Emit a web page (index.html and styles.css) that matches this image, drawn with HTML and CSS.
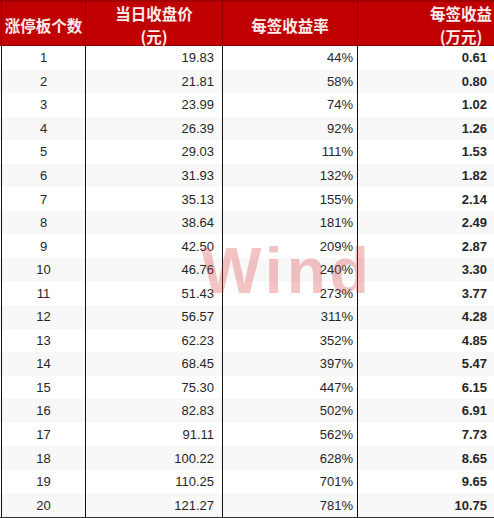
FILE: index.html
```html
<!DOCTYPE html>
<html lang="zh">
<head>
<meta charset="utf-8">
<link rel="stylesheet" href="styles.css">
</head>
<body>
<div class="table">
  <div class="head">
    <div class="hc c1">涨停板个数</div>
    <div class="hc c2"><span>当日收盘价</span><span>(元)</span></div>
    <div class="hc c3">每签收益率</div>
    <div class="hc c4"><div class="stack"><span>每签收益</span><span>(万元)</span></div></div>
  </div>
  <div class="row"><div class="c1">1</div><div class="c2">19.83</div><div class="c3">44%</div><div class="c4">0.61</div></div>
  <div class="row"><div class="c1">2</div><div class="c2">21.81</div><div class="c3">58%</div><div class="c4">0.80</div></div>
  <div class="row"><div class="c1">3</div><div class="c2">23.99</div><div class="c3">74%</div><div class="c4">1.02</div></div>
  <div class="row"><div class="c1">4</div><div class="c2">26.39</div><div class="c3">92%</div><div class="c4">1.26</div></div>
  <div class="row"><div class="c1">5</div><div class="c2">29.03</div><div class="c3">111%</div><div class="c4">1.53</div></div>
  <div class="row"><div class="c1">6</div><div class="c2">31.93</div><div class="c3">132%</div><div class="c4">1.82</div></div>
  <div class="row"><div class="c1">7</div><div class="c2">35.13</div><div class="c3">155%</div><div class="c4">2.14</div></div>
  <div class="row"><div class="c1">8</div><div class="c2">38.64</div><div class="c3">181%</div><div class="c4">2.49</div></div>
  <div class="row"><div class="c1">9</div><div class="c2">42.50</div><div class="c3">209%</div><div class="c4">2.87</div></div>
  <div class="row"><div class="c1">10</div><div class="c2">46.76</div><div class="c3">240%</div><div class="c4">3.30</div></div>
  <div class="row"><div class="c1">11</div><div class="c2">51.43</div><div class="c3">273%</div><div class="c4">3.77</div></div>
  <div class="row"><div class="c1">12</div><div class="c2">56.57</div><div class="c3">311%</div><div class="c4">4.28</div></div>
  <div class="row"><div class="c1">13</div><div class="c2">62.23</div><div class="c3">352%</div><div class="c4">4.85</div></div>
  <div class="row"><div class="c1">14</div><div class="c2">68.45</div><div class="c3">397%</div><div class="c4">5.47</div></div>
  <div class="row"><div class="c1">15</div><div class="c2">75.30</div><div class="c3">447%</div><div class="c4">6.15</div></div>
  <div class="row"><div class="c1">16</div><div class="c2">82.83</div><div class="c3">502%</div><div class="c4">6.91</div></div>
  <div class="row"><div class="c1">17</div><div class="c2">91.11</div><div class="c3">562%</div><div class="c4">7.73</div></div>
  <div class="row"><div class="c1">18</div><div class="c2">100.22</div><div class="c3">628%</div><div class="c4">8.65</div></div>
  <div class="row"><div class="c1">19</div><div class="c2">110.25</div><div class="c3">701%</div><div class="c4">9.65</div></div>
  <div class="row"><div class="c1">20</div><div class="c2">121.27</div><div class="c3">781%</div><div class="c4">10.75</div></div>
  <div class="watermark" aria-hidden="true">Wind</div>
</div>
</body>
</html>
```

FILE: styles.css
```css
html, body {
  margin: 0;
  padding: 0;
  background: #ffffff;
}
.table {
  position: relative;
  width: 494px;
  height: 518px;
  display: flex;
  flex-direction: column;
  font-family: "Liberation Sans", Arial, "Noto Sans CJK SC", sans-serif;
  color: #262626;
  box-sizing: border-box;
  border-bottom: 1px solid #333333;
  overflow: hidden;
}
.head, .row {
  display: grid;
  grid-template-columns: 86px 137px 135px 136px;
}
.head {
  height: 46px;
  flex: none;
  background: #c00000;
  box-sizing: border-box;
  border-top: 2px solid #a00000;
  border-bottom: 1px solid #8a0000;
}
.hc {
  display: flex;
  flex-direction: column;
  align-items: center;
  justify-content: center;
  color: #fbecec;
  font-family: "Noto Sans CJK SC", sans-serif;
  font-weight: 700;
  font-size: 15.5px;
  line-height: 23px;
  border-right: 1px solid #8e0000;
}
.hc.c1 {
  border-left: 1px solid #8e0000;
  margin-left: 1px;
}
.hc.c4 {
  border-right: none;
  align-items: flex-end;
  padding-right: 2px;
}
.stack {
  display: flex;
  flex-direction: column;
  align-items: center;
}
.row {
  flex: 1;
  font-size: 13px;
  align-items: stretch;
}
.row:nth-of-type(odd) {
  background: #f8f8f8;
}
.row > div {
  display: flex;
  align-items: center;
}
.row .c1 {
  justify-content: center;
  border-left: 1px solid #111111;
  margin-left: 1px;
  border-right: 1px solid #111111;
}
.row .c2 {
  justify-content: flex-end;
  padding-right: 8px;
  border-right: 1px solid #111111;
}
.row .c3 {
  justify-content: flex-end;
  padding-right: 4px;
  border-right: 1px solid #111111;
}
.row .c4 {
  justify-content: flex-end;
  padding-right: 7px;
  font-weight: 700;
}
.watermark {
  position: absolute;
  left: 201px;
  top: 239px;
  font-family: "Liberation Sans", Arial, sans-serif;
  font-weight: 700;
  font-size: 64px;
  line-height: 1;
  letter-spacing: 4px;
  color: rgba(220, 60, 60, 0.3);
  pointer-events: none;
}
```
